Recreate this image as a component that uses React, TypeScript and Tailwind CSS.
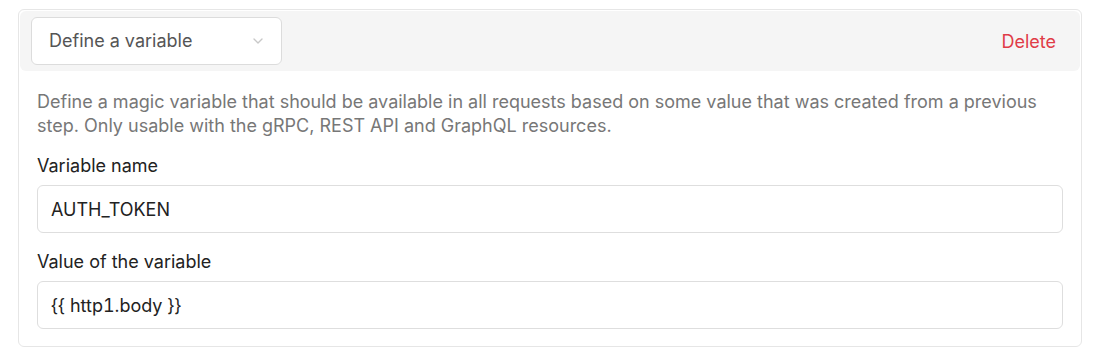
import { ChevronDown } from 'lucide-react';

const Field = ({ label, value, className = '' }: { label: string; value: string; className?: string }) => (
  <div className={`flex flex-col gap-[7px] ${className}`}>
    <label className="text-lg leading-6 text-[#222]">{label}</label>
    <input
      readOnly
      value={value}
      className="h-12 w-full rounded-md border border-[#dedede] bg-white px-[13px] text-lg tabular-nums text-[#222] outline-none"
    />
  </div>
);

export default function App() {
  return (
    <div className="bg-white px-[18px] pt-[9px] font-['Inter',sans-serif]">
      <div className="w-[1064px] rounded-md border border-[#e6e6e6] bg-white">
        <div className="m-px flex h-[60px] items-center justify-between rounded-md bg-[#f5f5f5] pl-[11px] pr-3">
          <button
            type="button"
            className="flex h-12 w-[251px] items-center justify-between rounded-md border border-[#dcdcdc] bg-white pl-[17px] pr-[15px] text-lg text-[#555]"
          >
            <span>Define a variable</span>
            <ChevronDown className="h-4 w-4 text-[#c8c8c8]" strokeWidth={2} />
          </button>
          <button type="button" className="pt-px pr-[12px] text-lg text-[#e03c47]">
            Delete
          </button>
        </div>
        <div className="flex flex-col gap-4 px-[18px] pt-[18px] pb-[17px]">
          <p className="text-lg leading-6 text-[#777]">
            Define a magic variable that should be available in all requests based on some value that was created from a
            previous step. Only usable with the gRPC, REST API and GraphQL resources.
          </p>
          <Field label="Variable name" value="AUTH_TOKEN" />
          <Field label="Value of the variable" value="{{ http1.body }}" className="mt-px" />
        </div>
      </div>
    </div>
  );
}
